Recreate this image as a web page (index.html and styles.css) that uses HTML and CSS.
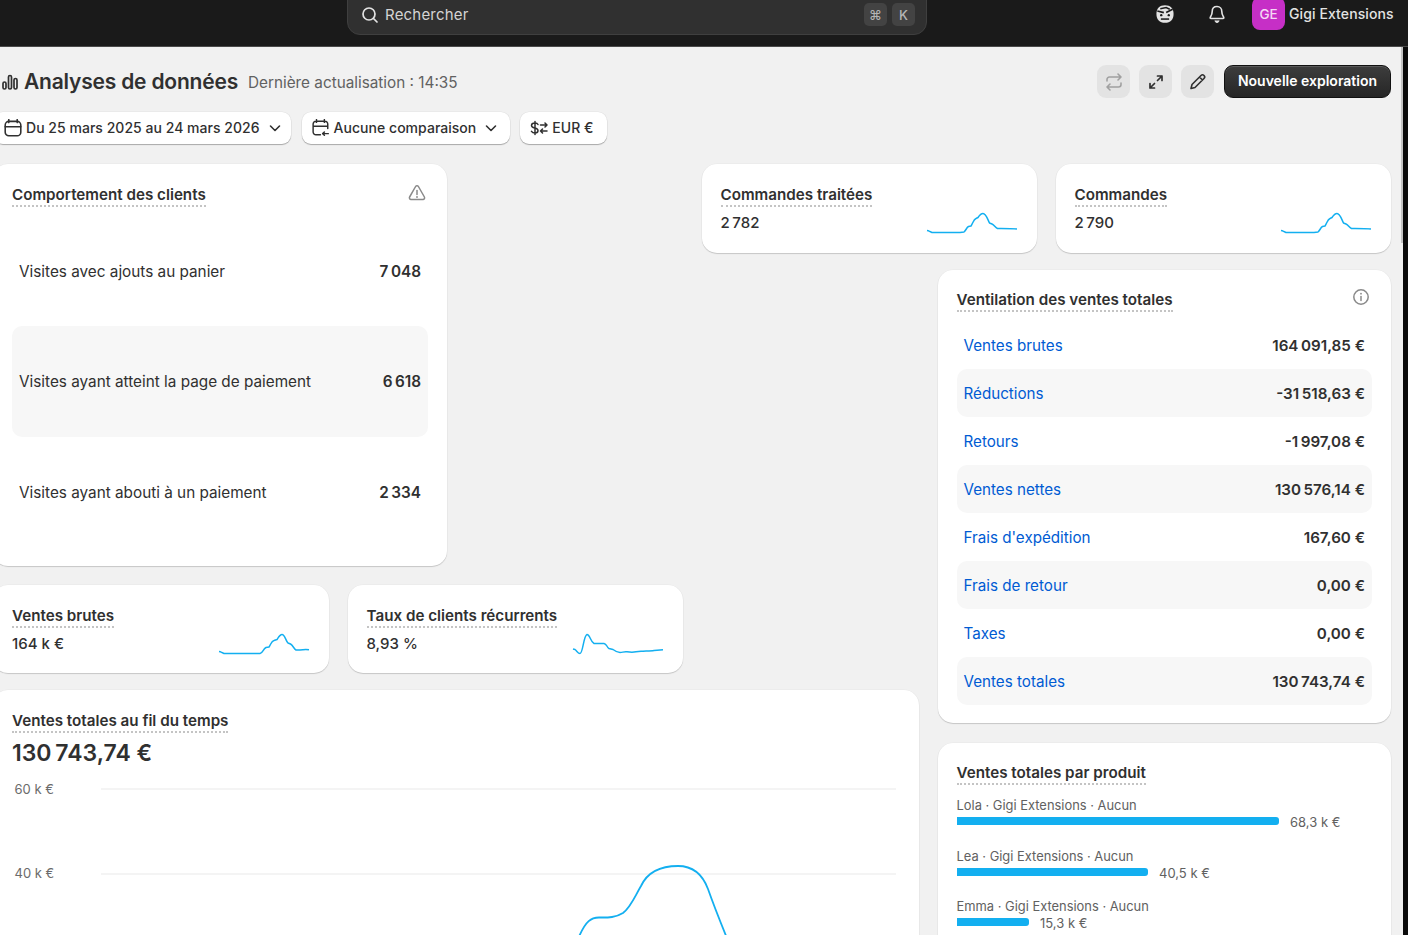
FILE: index.html
```html
<!DOCTYPE html>
<html lang="fr">
<head>
<meta charset="utf-8">
<title>Analyses de données</title>
<link rel="stylesheet" href="styles.css">
</head>
<body>
<div class="shell">
  <header class="topbar">
    <div class="search">
      <svg class="search-icon" viewBox="0 0 20 20" width="20" height="20"><circle cx="9" cy="9" r="6" fill="none" stroke="#e3e3e3" stroke-width="1.7"/><path d="M13.5 13.5 17 17" stroke="#e3e3e3" stroke-width="1.7" stroke-linecap="round"/></svg>
      <span class="search-text">Rechercher</span>
      <span class="keys"><kbd class="key">⌘</kbd><kbd class="key">K</kbd></span>
    </div>
    <div class="top-actions">
      <svg class="top-icon" viewBox="1.500 1.500 17 17" width="20" height="20"><path d="M10 2.500c4.600 0 7.300 2.600 7.300 7.500s-2.700 7.500-7.300 7.500S2.700 14.900 2.700 10 5.400 2.500 10 2.500Z" fill="#e3e3e3"/><path d="M3.500 7.500 9 8.800M16.500 6 11 8.800M6 5.500l5-1 3 1.500" stroke="#1a1a1a" stroke-width="1.400" fill="none"/><circle cx="6.800" cy="11" r="1" fill="#1a1a1a"/><circle cx="13.200" cy="11" r="1" fill="#1a1a1a"/><path d="M6.500 14.300h7" stroke="#1a1a1a" stroke-width="1.300"/></svg>
      <svg class="top-icon bell" viewBox="0 0 20 20" width="20" height="20"><path d="M10 2.500c-3 0-4.800 2.200-4.800 5 0 3.500-1.700 5-2 6.200-.1.500.2.800.7.800h12.200c.5 0 .8-.3.700-.8-.3-1.200-2-2.700-2-6.200 0-2.800-1.800-5-4.800-5Z" fill="none" stroke="#e3e3e3" stroke-width="1.600"/><path d="M8 16.500a2 2 0 0 0 4 0" fill="#e3e3e3" stroke="#e3e3e3" stroke-width="1"/></svg>
      <span class="avatar">GE</span>
      <span class="shop">Gigi Extensions</span>
    </div>
  </header>
  <div class="body-wrap">
    <main class="main">
      <div class="title-row">
        <div class="title-left">
          <svg class="title-icon" viewBox="0 0 16 16" width="16" height="16"><g fill="none" stroke="#303030" stroke-width="1.700"><rect x="1" y="8" width="3" height="7" rx="1.500"/><rect x="6.500" y="1.500" width="3" height="13.500" rx="1.500"/><rect x="12" y="4.500" width="3" height="10.500" rx="1.500"/></g></svg>
          <h1 class="page-title">Analyses de données</h1>
          <span class="refresh">Dernière actualisation : 14:35</span>
        </div>
        <div class="title-actions">
          <button class="icon-btn"><svg viewBox="0 0 20 20" width="20" height="20"><path d="M3 9V7.500A2.500 2.500 0 0 1 5.500 5H17m-3-3 3 3-3 3M17 11v1.500a2.500 2.500 0 0 1-2.500 2.500H3m3-3-3 3 3 3" fill="none" stroke="#a0a0a0" stroke-width="1.600" stroke-linecap="round" stroke-linejoin="round"/></svg></button>
          <button class="icon-btn"><svg viewBox="0 0 20 20" width="20" height="20"><path d="M11.500 8.500 16 4M11.500 4H16v4.500M8.500 11.500 4 16M8.500 16H4v-4.500" fill="none" stroke="#303030" stroke-width="1.700" stroke-linecap="round" stroke-linejoin="round"/></svg></button>
          <button class="icon-btn"><svg viewBox="0 0 20 20" width="20" height="20"><path d="M13 3.500a2.100 2.100 0 0 1 3 3L7 15.500l-4 1 1-4ZM11.500 5l3 3" fill="none" stroke="#303030" stroke-width="1.600" stroke-linecap="round" stroke-linejoin="round"/></svg></button>
          <button class="primary-btn">Nouvelle exploration</button>
        </div>
      </div>
      <div class="filters">
        <button class="pill pill-date">
          <svg viewBox="1.500 1.500 15 15" width="18" height="18"><path d="M2.500 8h13M5.500 2v2.500M12.500 2v2.500" stroke="#303030" stroke-width="1.300" stroke-linecap="round"/><rect x="2.500" y="3.500" width="13" height="12" rx="3" fill="none" stroke="#303030" stroke-width="1.300"/></svg>
          <span>Du 25 mars 2025 au 24 mars 2026</span>
          <svg class="chev" viewBox="0 0 12 12" width="12" height="12"><path d="M1.500 4 6 8.500 10.500 4" fill="none" stroke="#303030" stroke-width="1.600" stroke-linecap="round" stroke-linejoin="round"/></svg>
        </button>
        <button class="pill pill-compare">
          <svg viewBox="1.500 1.500 16 16" width="18" height="18"><path d="M9 15.500H5a2.500 2.500 0 0 1-2.500-2.500V6A2.500 2.500 0 0 1 5 3.500h8A2.500 2.500 0 0 1 15.500 6v4M2.500 8h13M5.500 2v2.500M12.500 2v2.500M11 14.500h5M12.500 13l-1.500 1.500 1.500 1.500" fill="none" stroke="#303030" stroke-width="1.300" stroke-linecap="round" stroke-linejoin="round"/></svg>
          <span>Aucune comparaison</span>
          <svg class="chev" viewBox="0 0 12 12" width="12" height="12"><path d="M1.500 4 6 8.500 10.500 4" fill="none" stroke="#303030" stroke-width="1.600" stroke-linecap="round" stroke-linejoin="round"/></svg>
        </button>
        <button class="pill pill-currency">
          <svg viewBox="0 0 18 18" width="18" height="18"><path d="M8 5.500C7.500 4.500 6.500 4 5 4 3 4 1.500 5 1.500 6.500 1.500 10 8 8 8 11.500 8 13 6.700 14 5 14c-1.500 0-2.800-.6-3.500-1.700M5 2.500v13M10.500 6H17m-2-2 2 2-2 2M17 12h-6.500m2-2-2 2 2 2" fill="none" stroke="#303030" stroke-width="1.500" stroke-linecap="round" stroke-linejoin="round"/></svg>
          <span>EUR €</span>
        </button>
      </div>
      <div class="dash">
        <section class="card behaviour">
          <div class="card-head">
            <h2 class="metric-title">Comportement des clients</h2>
            <svg class="head-icon" viewBox="0 0 20 20" width="20" height="20"><path d="M8.600 3.500a1.600 1.600 0 0 1 2.800 0l6 10.500a1.600 1.600 0 0 1-1.400 2.400H4a1.600 1.600 0 0 1-1.400-2.400Z" fill="none" stroke="#8a8a8a" stroke-width="1.500"/><path d="M10 7.500v4" stroke="#8a8a8a" stroke-width="1.500" stroke-linecap="round"/><circle cx="10" cy="14" r=".9" fill="#8a8a8a"/></svg>
          </div>
          <div class="funnel">
            <div class="funnel-row"><span>Visites avec ajouts au panier</span><b>7&#8239;048</b></div>
            <div class="funnel-row shaded"><span>Visites ayant atteint la page de paiement</span><b>6&#8239;618</b></div>
            <div class="funnel-row"><span>Visites ayant abouti à un paiement</span><b>2&#8239;334</b></div>
          </div>
        </section>

        <section class="card kpi kpi-processed">
          <div><h2 class="metric-title">Commandes traitées</h2><p class="kpi-value">2&#8239;782</p></div>
          <svg class="spark" viewBox="0 0 90 22" width="90" height="22"><path d="M0 18.500 1.500 18.800 5 20.500H33L37 20C39 18.500 39.500 15.500 41.500 14.500L44 14C46 11 46.500 7.500 49 6.500L51 5.500C53 2.500 54 1.500 56 1.500 59 1.500 60.500 7 62.500 11L65 12C67.500 13 68 15.500 70.500 16.500H74C77 16.500 88 16.800 90 17" class="spark-line"/></svg>
        </section>

        <section class="card kpi kpi-orders">
          <div><h2 class="metric-title">Commandes</h2><p class="kpi-value">2&#8239;790</p></div>
          <svg class="spark" viewBox="0 0 90 22" width="90" height="22"><path d="M0 18.500 1.500 18.800 5 20.500H33L37 20C39 18.500 39.500 15.500 41.500 14.500L44 14C46 11 46.500 7.500 49 6.500L51 5.500C53 2.500 54 1.500 56 1.500 59 1.500 60.500 7 62.500 11L65 12C67.500 13 68 15.500 70.500 16.500H74C77 16.500 88 16.800 90 17" class="spark-line"/></svg>
        </section>

        <section class="card breakdown">
          <div class="card-head">
            <h2 class="metric-title">Ventilation des ventes totales</h2>
            <svg class="head-icon" viewBox="0 0 20 20" width="20" height="20"><circle cx="10" cy="10" r="7.200" fill="none" stroke="#8a8a8a" stroke-width="1.500"/><path d="M10 9.500v4" stroke="#8a8a8a" stroke-width="1.500" stroke-linecap="round"/><circle cx="10" cy="6.700" r=".9" fill="#8a8a8a"/></svg>
          </div>
          <ul class="ledger">
            <li class="ledger-row"><a>Ventes brutes</a><b>164&#8239;091,85 €</b></li>
            <li class="ledger-row shaded"><a>Réductions</a><b>-31&#8239;518,63 €</b></li>
            <li class="ledger-row"><a>Retours</a><b>-1&#8239;997,08 €</b></li>
            <li class="ledger-row shaded"><a>Ventes nettes</a><b>130&#8239;576,14 €</b></li>
            <li class="ledger-row"><a>Frais d'expédition</a><b>167,60 €</b></li>
            <li class="ledger-row shaded"><a>Frais de retour</a><b>0,00 €</b></li>
            <li class="ledger-row"><a>Taxes</a><b>0,00 €</b></li>
            <li class="ledger-row shaded"><a>Ventes totales</a><b>130&#8239;743,74 €</b></li>
          </ul>
        </section>

        <section class="card kpi kpi-gross">
          <div><h2 class="metric-title">Ventes brutes</h2><p class="kpi-value">164 k €</p></div>
          <svg class="spark" viewBox="0 0 90 22" width="90" height="22"><path d="M0 18.500 1.500 18.800 5 20.500H41C44 20 44 16 47 14.500L50 14C52 11 52.500 8 55 7.500L58 6.500C60 3.500 61 1.500 63 1.500 66 1.500 66.500 7.500 69 10L71.500 11C74 12.500 75 16 77 17H81C85 16.500 88 16.500 90 16.800" class="spark-line"/></svg>
        </section>

        <section class="card kpi kpi-returning">
          <div><h2 class="metric-title">Taux de clients récurrents</h2><p class="kpi-value">8,93 %</p></div>
          <svg class="spark" viewBox="0 0 90 22" width="90" height="22"><path d="M0 16 2 16.500C4 18 5 20.500 7 20.500 10 20.500 10.500 2.500 14 1.500 17 1.500 17.500 9 21 10.500H31C34 11 33.500 14 36 15.500L40 16.500C42 18 44 19.500 47 19.500 50 19.500 50 18.500 54 18.800 57 19.300 60 19.500 63 18.800L68 18.300C72 18 78 18 81 17.500L90 16.800" class="spark-line"/></svg>
        </section>

        <section class="card trend">
          <h2 class="metric-title">Ventes totales au fil du temps</h2>
          <p class="trend-value">130&#8239;743,74 €</p>
          <svg class="trend-chart" viewBox="0 0 926 400" width="926" height="400">
            <line class="grid-line" x1="108" x2="903" y1="28" y2="28"/>
            <line class="grid-line" x1="108" x2="903" y1="113" y2="113"/>
            <text class="axis-label" x="21.500" y="33">60 k €</text>
            <text class="axis-label" x="21.500" y="117">40 k €</text>
            <path class="trend-line" d="M586.500 174.500C593 160 598 156.500 606 156.500 614 156.500 622 157 630 152 638 146 642 135 648 125 655 110 668 105 685 105 699 105 709 112 715 128 721 145 727 160 733.500 176"/>
          </svg>
        </section>

        <section class="card products">
          <h2 class="metric-title">Ventes totales par produit</h2>
          <ul class="bars">
            <li class="bar-item"><span class="bar-label">Lola · Gigi Extensions · Aucun</span><div class="bar-line"><i class="bar" style="width:322.5px"></i><span class="bar-value">68,3 k €</span></div></li>
            <li class="bar-item"><span class="bar-label">Lea · Gigi Extensions · Aucun</span><div class="bar-line"><i class="bar" style="width:191.5px"></i><span class="bar-value">40,5 k €</span></div></li>
            <li class="bar-item"><span class="bar-label">Emma · Gigi Extensions · Aucun</span><div class="bar-line"><i class="bar" style="width:72.5px"></i><span class="bar-value">15,3 k €</span></div></li>
          </ul>
        </section>
      </div>
    </main>
    <div class="scroll-rail"><div class="scroll-thumb"></div></div>
    <div class="edge"></div>
  </div>
</div>
</body>
</html>
```
FILE: styles.css
```css
* { box-sizing: border-box; }
html, body { margin: 0; height: 100%; overflow: hidden; background: #0b0b0b; }
body { font-family: Inter, "Noto Sans", sans-serif; color: #303030; }
h1, h2, p, ul { margin: 0; padding: 0; }
ul { list-style: none; }
button { font: inherit; color: inherit; border: 0; cursor: pointer; }

.shell { height: 935px; display: flex; flex-direction: column; overflow: hidden; }

.topbar { height: 47px; flex: none; background: #1a1a1a; border-bottom: 1px solid #4a4a4a; display: flex; align-items: flex-start; }
.search { width: 580px; height: 41px; margin: -6px 0 0 347px; padding: 0 11px 0 12px; background: #303030; border: 1px solid #3f3f3f; border-radius: 0 0 13px 13px; display: flex; align-items: center; gap: 5px; }
.search-icon { flex: none; }
.search-text { font-size: 15px; color: #d4d4d4; letter-spacing: .2px; }
.keys { margin-left: auto; display: flex; gap: 5px; }
.key { width: 23px; height: 23px; border-radius: 5px; background: #434343; color: #b5b5b5; font: 500 13px Inter, "DejaVu Sans", sans-serif; display: flex; align-items: center; justify-content: center; }
.top-actions { margin-left: 228px; height: 28px; display: flex; align-items: center; }
.top-icon { flex: none; }
.bell { margin-left: 32px; }
.avatar { margin-left: 25px; width: 33px; height: 33px; margin-top: -2px; padding-top: 2px; border-radius: 8px; background: #c62fc6; color: #f4d8f4; font-size: 13.500px; font-weight: 500; display: flex; align-items: center; justify-content: center; }
.shop { margin: -2px 0 0 4px; font-size: 14px; font-weight: 500; color: #e3e3e3; letter-spacing: .1px; white-space: nowrap; }

.body-wrap { flex: 1; display: flex; min-height: 0; }
.main { width: 1401px; flex: none; background: #f1f1f1; overflow: hidden; }
.scroll-rail { width: 2px; flex: none; background: #f1f1f1; }
.scroll-thumb { height: 196px; background: #c4c4c4; }
.edge { flex: 1; background: #0b0b0b; }

.title-row { height: 51px; margin-top: 9px; width: 1391px; display: flex; align-items: center; justify-content: space-between; }
.title-left { display: flex; align-items: center; margin-left: 2px; }
.title-icon { flex: none; }
.page-title { margin-left: 6px; font-size: 21px; font-weight: 600; color: #303030; letter-spacing: -.2px; }
.refresh { margin: 2px 0 0 10px; font-size: 15.300px; color: #616161; }
.title-actions { display: flex; gap: 9px; align-items: center; }
.icon-btn { width: 33px; height: 33px; padding: 0; border-radius: 9px; background: #e3e3e3; display: flex; align-items: center; justify-content: center; }
.primary-btn { height: 33px; width: 167px; margin-left: 1px; padding: 0 0 2px; border-radius: 9px; background: linear-gradient(#3d3d3d, #262626); border: 1px solid #111; box-shadow: inset 0 1px 0 #5a5a5a; color: #fff; font-size: 14px; font-weight: 600; }

.filters { margin: 5px 0 0 -6px; display: flex; gap: 10px; height: 32px; }
.pill { height: 32px; padding: 0 13px 1px 10px; border-radius: 9px; background: #fff; box-shadow: 0 1px 1px rgba(0,0,0,.28), 0 0 0 .5px rgba(0,0,0,.06); font-size: 14px; font-weight: 500; letter-spacing: .03px; display: flex; align-items: center; gap: 4px; white-space: nowrap; }
.chev { margin-left: 5px; }
.pill-date { padding-right: 10px; margin-right: 1px; }

.dash { margin: 20px 0 0 -7px; width: 1398px; display: grid; column-gap: 19px; grid-template-columns: 336px 99px 217px 217px 99px 335px; grid-template-rows: 89px 17px 296px 19px 88px 17px 33px 20px 500px; }
.card { background: #fff; border-radius: 15px; padding: 19px; box-shadow: 0 1px 1px rgba(0,0,0,.16), 0 0 0 .5px rgba(0,0,0,.04); }
.behaviour { grid-column: 1 / 3; grid-row: 1 / 4; }
.kpi-processed { grid-column: 4 / 6; grid-row: 1; padding-left: 18.500px; }
.kpi-orders { grid-column: 6; grid-row: 1; padding-left: 18.500px; }
.breakdown { grid-column: 5 / 7; grid-row: 3 / 8; padding: 18px 19px 19px 18.500px; }
.kpi-gross { grid-column: 1; grid-row: 5; }
.kpi-returning { grid-column: 2 / 4; grid-row: 5; padding-left: 18.500px; }
.trend { grid-column: 1 / 5; grid-row: 7 / 10; padding-bottom: 0; }
.products { grid-column: 5 / 7; grid-row: 9; padding-left: 18.500px; padding-top: 18px; }

.card-head { display: flex; justify-content: space-between; align-items: flex-start; }
.head-icon { margin: -1px 1px 0 0; flex: none; }
.behaviour .head-icon { margin-top: 0; }
.metric-title { width: fit-content; font-size: 15.200px; line-height: 17px; font-weight: 600; color: #303030; padding: 3px 0 1.500px; border-bottom: 2px dotted #c4c4c4; white-space: nowrap; }

.funnel { margin-top: 9px; }
.funnel-row { height: 110.500px; padding: 1px 7px 0; display: flex; align-items: center; justify-content: space-between; font-size: 15.300px; }
.funnel-row b, .ledger-row b { font-weight: 600; white-space: nowrap; }
.shaded { background: #f7f7f7; border-radius: 10px; }

.kpi { display: flex; justify-content: space-between; align-items: flex-start; }
.kpi-value { margin-top: 6px; font-size: 15px; line-height: 20px; font-weight: 500; }
.spark { flex: none; margin: 29px 1px 0 0; overflow: visible; }
.spark-line { fill: none; stroke: #13aff0; stroke-width: 1.500; stroke-linejoin: round; }

.ledger { margin-top: 9.500px; }
.ledger-row { height: 48px; padding: 0 7px; display: flex; align-items: center; justify-content: space-between; font-size: 15.200px; }
.ledger-row a { color: #005bd3; }

.trend-value { margin-top: 5.500px; font-size: 23px; line-height: 30px; font-weight: 600; }
.trend-chart { display: block; margin: -7px 0 0 -19px; }
.grid-line { stroke: #f1f1f1; stroke-width: 1.500; }
.axis-label { font-family: Inter, sans-serif; font-size: 13px; fill: #6b6b6b; }
.trend-line { fill: none; stroke: #13aff0; stroke-width: 1.800; }

.bars { margin-top: 13.500px; }
.bar-item { height: 50.500px; }
.bar-label { display: block; font-size: 12.900px; line-height: 16px; color: #616161; }
.bar-line { display: flex; align-items: center; gap: 11px; margin-top: 0; height: 16px; }
.bar { display: block; height: 8px; background: #13aff0; border-radius: 0 3px 3px 0; margin-top: -2px; }
.bar-value { font-size: 13px; color: #616161; }
```
